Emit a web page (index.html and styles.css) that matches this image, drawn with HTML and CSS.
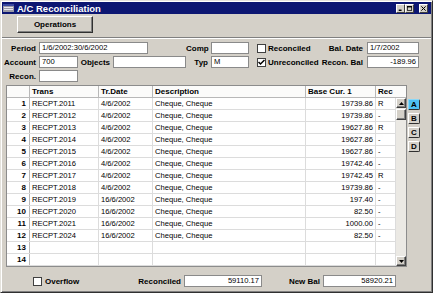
FILE: index.html
```html
<!DOCTYPE html>
<html lang="en">
<head>
<meta charset="UTF-8">
<meta name="viewport" content="width=device-width, initial-scale=1.0">
<title>A/C Reconciliation</title>
<link rel="stylesheet" href="styles.css">
</head>
<body>
<div class="window">
    <div class="titlebar">
        <svg class="app-icon" width="11" height="8" viewBox="0 0 11 8">
            <rect x="0" y="0" width="11" height="8" fill="#9a9aa6"/>
            <rect x="0" y="0" width="11" height="2" fill="#3a4aa0"/>
            <rect x="1" y="3" width="9" height="1" fill="#e8e8f0"/>
            <rect x="1" y="5" width="9" height="1" fill="#e8e8f0"/>
        </svg>
        <span class="title">A/C Reconciliation</span>
        <div class="controls">
            <span class="ctl"><svg width="7" height="7" viewBox="0 0 7 7"><rect x="1" y="5" width="4" height="2" fill="#000"/></svg></span>
            <span class="ctl"><svg width="7" height="7" viewBox="0 0 7 7"><rect x="0.5" y="0.5" width="6" height="6" fill="none" stroke="#000"/><rect x="0" y="0" width="7" height="2" fill="#000"/></svg></span>
            <span class="ctl close"><svg width="7" height="7" viewBox="0 0 7 7"><path d="M0.5 0.5 L6.5 6.5 M6.5 0.5 L0.5 6.5" stroke="#000" stroke-width="1.4"/></svg></span>
        </div>
    </div>

    <div class="toolbar">
        <button class="btn">Operations</button>
    </div>

    <div class="form">
        <span class="lbl c1">Period</span>
        <div class="field period">1/6/2002:30/6/2002</div>
        <span class="lbl c5">Comp</span>
        <div class="field c6"></div>
        <div class="check c7"><span class="box"></span><span class="lbl-left">Reconciled</span></div>
        <span class="lbl c8">Bal. Date</span>
        <div class="field c9">1/7/2002</div>

        <span class="lbl c1">Account</span>
        <div class="field c2">700</div>
        <span class="lbl c3">Objects</span>
        <div class="field c4"></div>
        <span class="lbl c5">Typ</span>
        <div class="field c6">M</div>
        <div class="check c7"><span class="box"><svg width="7" height="7" viewBox="0 0 7 7"><path d="M0.5 3 L2.5 5 L6.5 1" fill="none" stroke="#000" stroke-width="1.5"/></svg></span><span class="lbl-left">Unreconciled</span></div>
        <span class="lbl c8">Recon. Bal</span>
        <div class="field c9 num">-189.96</div>

        <span class="lbl c1">Recon.</span>
        <div class="field c2"></div>
    </div>

    <div class="grid-area">
        <div class="grid-frame">
            <div class="grid-head">
                <div class="hcell"></div>
                <div class="hcell">Trans</div>
                <div class="hcell">Tr.Date</div>
                <div class="hcell">Description</div>
                <div class="hcell">Base Cur. 1</div>
                <div class="hcell">Rec</div>
            </div>
            <div class="grid-body">
                <div class="rows">
                    <div class="row"><span class="rn">1</span><span>RECPT.2011</span><span>4/6/2002</span><span>Cheque, Cheque</span><span class="amt">19739.86</span><span>R</span></div>
                    <div class="row"><span class="rn">2</span><span>RECPT.2012</span><span>4/6/2002</span><span>Cheque, Cheque</span><span class="amt">19739.86</span><span>-</span></div>
                    <div class="row"><span class="rn">3</span><span>RECPT.2013</span><span>4/6/2002</span><span>Cheque, Cheque</span><span class="amt">19627.86</span><span>R</span></div>
                    <div class="row"><span class="rn">4</span><span>RECPT.2014</span><span>4/6/2002</span><span>Cheque, Cheque</span><span class="amt">19627.86</span><span>-</span></div>
                    <div class="row"><span class="rn">5</span><span>RECPT.2015</span><span>4/6/2002</span><span>Cheque, Cheque</span><span class="amt">19627.86</span><span>-</span></div>
                    <div class="row"><span class="rn">6</span><span>RECPT.2016</span><span>4/6/2002</span><span>Cheque, Cheque</span><span class="amt">19742.46</span><span>-</span></div>
                    <div class="row"><span class="rn">7</span><span>RECPT.2017</span><span>4/6/2002</span><span>Cheque, Cheque</span><span class="amt">19742.45</span><span>R</span></div>
                    <div class="row"><span class="rn">8</span><span>RECPT.2018</span><span>4/6/2002</span><span>Cheque, Cheque</span><span class="amt">19739.86</span><span>-</span></div>
                    <div class="row"><span class="rn">9</span><span>RECPT.2019</span><span>16/6/2002</span><span>Cheque, Cheque</span><span class="amt">197.40</span><span>-</span></div>
                    <div class="row"><span class="rn">10</span><span>RECPT.2020</span><span>16/6/2002</span><span>Cheque, Cheque</span><span class="amt">82.50</span><span>-</span></div>
                    <div class="row"><span class="rn">11</span><span>RECPT.2021</span><span>16/6/2002</span><span>Cheque, Cheque</span><span class="amt">1000.00</span><span>-</span></div>
                    <div class="row"><span class="rn">12</span><span>RECPT.2024</span><span>16/6/2002</span><span>Cheque, Cheque</span><span class="amt">82.50</span><span>-</span></div>
                    <div class="row"><span class="rn">13</span><span></span><span></span><span></span><span class="amt"></span><span></span></div>
                    <div class="row"><span class="rn">14</span><span></span><span></span><span></span><span class="amt"></span><span></span></div>
                </div>
                <div class="scrollbar">
                    <span class="sb-btn"><svg width="5" height="3" viewBox="0 0 5 3"><path d="M0 3 L2.5 0 L5 3 Z" fill="#000"/></svg></span>
                    <span class="sb-thumb"></span>
                    <span class="sb-track"></span>
                    <span class="sb-btn"><svg width="5" height="3" viewBox="0 0 5 3"><path d="M0 0 L5 0 L2.5 3 Z" fill="#000"/></svg></span>
                </div>
            </div>
        </div>
        <div class="tabs">
            <span class="tab active">A</span>
            <span class="tab">B</span>
            <span class="tab">C</span>
            <span class="tab">D</span>
        </div>
    </div>

    <div class="footer">
        <div class="check overflow"><span class="box"></span><span class="lbl-left">Overflow</span></div>
        <span class="lbl">Reconciled</span>
        <div class="field num">59110.17</div>
        <span class="lbl">New Bal</span>
        <div class="field num">58920.21</div>
    </div>
</div>
</body>
</html>
```

FILE: styles.css
```css
* {
    box-sizing: border-box;
}

body {
    margin: 0;
    background-color: #d4d0c8;
    font-family: "Liberation Sans", Arial, sans-serif;
    font-size: 7.6px;
    color: #000;
}

.window {
    width: 433px;
    height: 293px;
    padding: 1px;
    background-color: #d4d0c8;
    border: 1px solid;
    border-color: #e4e2dc #303030 #303030 #e4e2dc;
    box-shadow: inset 1px 1px #fff, inset -1px -1px #808080;
    display: flex;
    flex-direction: column;
}

/* title bar */
.titlebar {
    height: 12px;
    background-color: #0c1672;
    color: #fff;
    display: flex;
    align-items: center;
}

.app-icon {
    margin-left: 1px;
    margin-right: 3px;
}

.title {
    font-weight: bold;
    font-size: 9.5px;
}

.controls {
    margin-left: auto;
    margin-right: 3px;
    display: flex;
}

.ctl {
    width: 9px;
    height: 9px;
    background-color: #d4d0c8;
    border: 1px solid;
    border-color: #fff #404040 #404040 #fff;
    display: flex;
    align-items: center;
    justify-content: center;
}

.ctl svg {
    width: 5px;
    height: 5px;
}

.ctl.close {
    margin-left: 5px;
}

/* toolbar */
.toolbar {
    height: 24px;
    padding: 2px 0 0 15px;
    border-bottom: 1px solid #808080;
    box-shadow: 0 1px #fff;
}

.btn {
    width: 76px;
    height: 17px;
    padding: 0;
    font-family: inherit;
    font-size: 8px;
    font-weight: bold;
    background-color: #d4d0c8;
    border: 1px solid;
    border-color: #fff #303030 #303030 #fff;
    box-shadow: inset -1px -1px #808080;
}

/* form */
.form {
    margin-top: 4px;
    display: grid;
    grid-template-columns: 37px 39px 35px 73px 25px 38px 69px 49px 52px;
    grid-template-rows: 12px 12px 12px;
    row-gap: 2px;
    align-items: center;
}

.lbl {
    font-weight: bold;
    font-size: 8px;
    text-align: right;
    padding-right: 3px;
    white-space: nowrap;
}

.lbl-left {
    font-weight: bold;
    font-size: 8px;
    white-space: nowrap;
}

.field {
    height: 12px;
    background-color: #fff;
    border: 1px solid #8a8a8a;
    padding: 0 2px;
    line-height: 10px;
    white-space: nowrap;
    overflow: hidden;
}

.num {
    text-align: right;
}

.c1 { grid-column: 1; }
.c2 { grid-column: 2; }
.c3 { grid-column: 3; }
.c4 { grid-column: 4; }
.c5 { grid-column: 5; }
.c6 { grid-column: 6; }
.c7 { grid-column: 7; }
.c8 { grid-column: 8; padding-right: 4px; }
.c9 { grid-column: 9; }

.period {
    grid-column: 2 / span 3;
    width: 109px;
}

.check {
    display: flex;
    align-items: center;
    padding-left: 8px;
}

.box {
    width: 9px;
    height: 9px;
    flex: none;
    background-color: #fff;
    border: 1px solid #404040;
    margin-right: 2px;
    display: flex;
    align-items: center;
    justify-content: center;
}

/* grid */
.grid-area {
    margin-top: 3px;
    margin-left: 4px;
    display: flex;
}

.grid-frame {
    width: 401px;
    border: 1px solid #8c8c8c;
    background-color: #fff;
}

.grid-head {
    height: 12px;
    display: grid;
    grid-template-columns: 23px 69px 54px 153px 70px 1fr;
    border-bottom: 1px solid #b8b8b8;
    background-color: #fbfbfa;
}

.hcell {
    font-weight: bold;
    font-size: 8px;
    line-height: 11px;
    padding-left: 2px;
    border-right: 1px solid #b8b8b8;
}

.hcell:last-child {
    border-right: none;
}

.grid-body {
    display: flex;
}

.rows {
    width: 389px;
}

.row {
    height: 12px;
    display: grid;
    grid-template-columns: 23px 69px 54px 153px 70px 20px;
    border-bottom: 1px solid #dcdcdc;
}

.row span {
    line-height: 11px;
    padding-left: 2px;
    border-right: 1px solid #dcdcdc;
    white-space: nowrap;
    overflow: hidden;
}

.row span.rn {
    font-weight: bold;
    font-size: 8px;
    text-align: right;
    padding-right: 3px;
    border-right-color: #b8b8b8;
}

.row span.amt {
    text-align: right;
    padding-right: 2px;
}

.scrollbar {
    width: 10px;
    display: flex;
    flex-direction: column;
    background-color: #ebe9e4;
}

.sb-btn,
.sb-thumb {
    height: 10px;
    background-color: #d4d0c8;
    border: 1px solid;
    border-color: #fff #404040 #404040 #fff;
    box-shadow: inset -1px -1px #808080;
    display: flex;
    align-items: center;
    justify-content: center;
}

.sb-thumb {
    height: 11px;
    margin-top: 1px;
}

.sb-track {
    flex: 1;
}

.tabs {
    margin-left: 1px;
    padding-top: 14px;
    display: flex;
    flex-direction: column;
    gap: 3px;
}

.tab {
    width: 12px;
    height: 11px;
    font-weight: bold;
    font-size: 8px;
    line-height: 9px;
    text-align: center;
    background-color: #d4d0c8;
    border: 1px solid;
    border-color: #fff #303030 #303030 #fff;
    border-radius: 0 2px 2px 0;
}

.tab.active {
    background-color: #4fc0f2;
    border-color: #8ad8f8 #303030 #303030 #8ad8f8;
}

/* footer */
.footer {
    margin-top: 8px;
    display: grid;
    grid-template-columns: 135px 47px 78px 61px 73px;
    grid-template-rows: 12px;
    align-items: center;
}

.check.overflow {
    padding-left: 31px;
}

.check.overflow .box {
    margin-right: 3px;
}
```
